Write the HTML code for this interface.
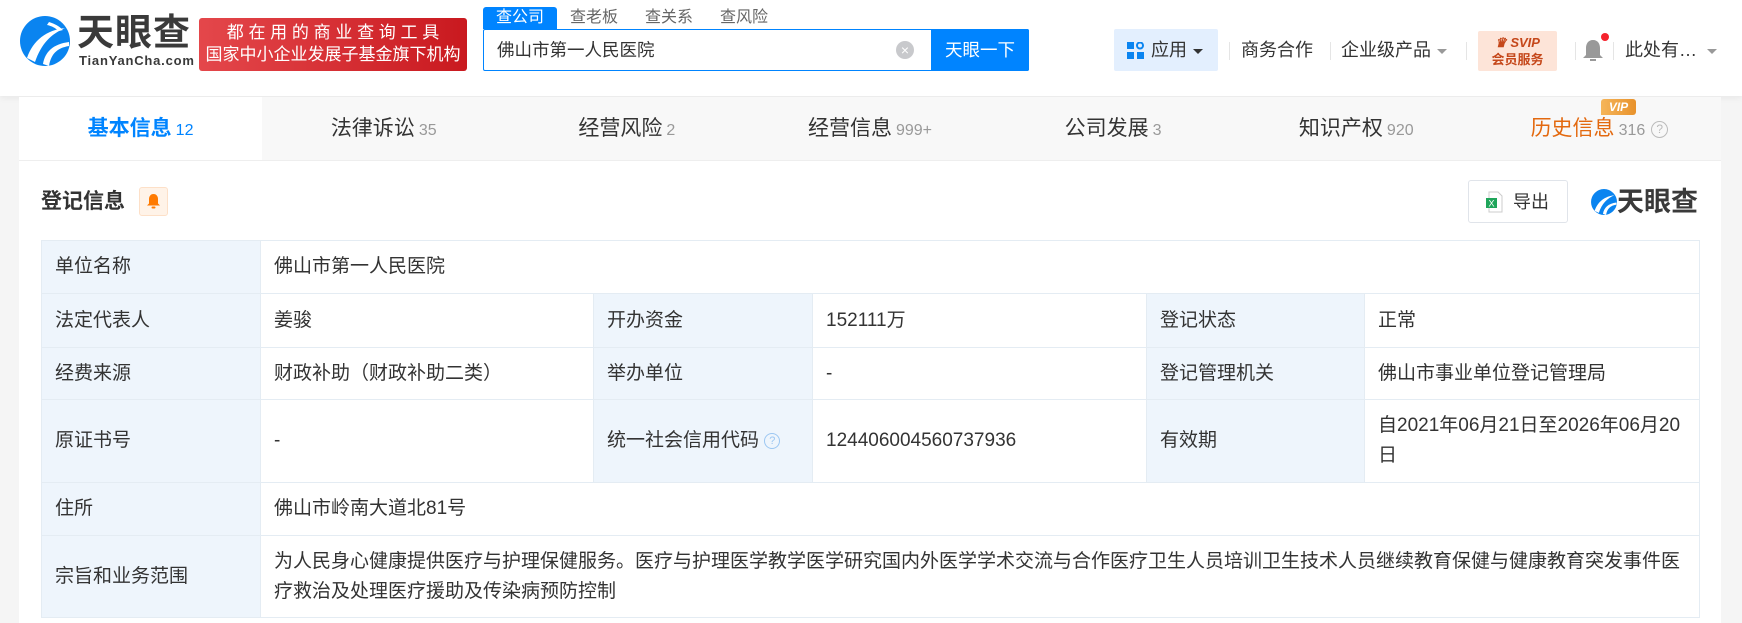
<!DOCTYPE html>
<html><head><meta charset="utf-8"><style>
*{margin:0;padding:0;box-sizing:border-box}
body{width:1742px;height:623px;overflow:hidden;background:#f5f5f5;font-family:"Liberation Sans","Noto Sans CJK SC",sans-serif;color:#333;position:relative}
.a{position:absolute}
.hdr{left:0;top:0;width:1742px;height:96px;background:#fff;box-shadow:0 2px 6px rgba(0,0,0,.06)}
.badge{left:199px;top:18px;width:268px;height:53px;border-radius:3px;background:linear-gradient(90deg,#e4474b,#c9191f);color:#fff;font-size:17px;line-height:22px;padding-top:4px;text-align:center}
.stab{top:7px;height:22px;font-size:16px;line-height:22px;color:#666}
.nav{top:38px;font-size:18px;line-height:24px;color:#333}
.div{top:42px;width:1px;height:18px;background:#e5e5e5}
.caret{display:inline-block;border-left:5px solid transparent;border-right:5px solid transparent;border-top:5px solid #999;vertical-align:middle;margin-left:6px}
.card{left:19px;top:97px;width:1702px;height:526px;background:#fff}
.tabs{left:19px;top:97px;width:1702px;height:64px;background:#f8f8f8;border-bottom:1px solid #eee;display:flex}
.tab{flex:1;text-align:center;font-size:21px;line-height:63px;color:#333}
.tab small{font-size:16px;color:#999;margin-left:4px}
table{position:absolute;left:41px;top:240px;width:1658px;border-collapse:collapse;font-size:19px;color:#333;table-layout:fixed}
td{border:1px solid #e4ecf3;padding:0 13px;line-height:30px;vertical-align:middle;white-space:nowrap}
td.l{background:#eef5fc}
</style></head><body>
<div class="a hdr"></div>
<svg class="a" style="left:19px;top:14px" width="52" height="54" viewBox="0 0 52 54">
<circle cx="26" cy="27" r="25" fill="#0a84f0"/>
<path d="M8 44 C14 26 28 16 46 14 C32 20 22 30 16 48 Z" fill="#fff"/>
<path d="M24 50 C26 38 34 30 50 28 L50 32 C38 34 32 40 30 52 Z" fill="#fff"/>
<path d="M30 8 C36 10 40 12 44 16 L40 17 C36 14 33 12 28 11 Z" fill="#fff"/>
</svg>
<div class="a" style="left:77px;top:13px;font-size:37px;font-weight:bold;color:#3a3a3a;letter-spacing:1px;line-height:40px">天眼查</div>
<div class="a" style="left:79px;top:53px;font-size:13px;font-weight:bold;color:#3a3a3a;letter-spacing:.8px">TianYanCha.com</div>
<div class="a badge">都&nbsp;在&nbsp;用&nbsp;的&nbsp;商&nbsp;业&nbsp;查&nbsp;询&nbsp;工&nbsp;具<br>国家中小企业发展子基金旗下机构</div>
<div class="a stab" style="left:483px;width:74px;background:#0084ff;color:#fff;text-align:center;border-radius:3px 3px 0 0">查公司</div>
<div class="a stab" style="left:570px">查老板</div>
<div class="a stab" style="left:645px">查关系</div>
<div class="a stab" style="left:720px">查风险</div>
<div class="a" style="left:483px;top:29px;width:546px;height:42px;border:1px solid #0084ff;border-radius:2px;background:#fff"></div>
<div class="a" style="left:497px;top:38px;font-size:17.5px;line-height:24px;color:#333">佛山市第一人民医院</div>
<div class="a" style="left:896px;top:41px;width:18px;height:18px;border-radius:50%;background:#c8c9cc;color:#fff;font-size:14px;line-height:18px;text-align:center">×</div>
<div class="a" style="left:931px;top:29px;width:98px;height:42px;background:#0084ff;color:#fff;font-size:17.5px;line-height:42px;text-align:center;border-radius:0 2px 2px 0">天眼一下</div>
<div class="a" style="left:1114px;top:29px;width:104px;height:42px;background:#e3effe;border-radius:2px"></div>
<svg class="a" style="left:1127px;top:42px" width="17" height="17"><rect x="0" y="0" width="7" height="7" fill="#0a84f0"/><circle cx="13" cy="3.5" r="3" fill="none" stroke="#0a84f0" stroke-width="2"/><rect x="0" y="10" width="7" height="7" fill="#0a84f0"/><rect x="10" y="10" width="7" height="7" fill="#0a84f0"/></svg>
<div class="a nav" style="left:1151px">应用<span class="caret" style="border-top-color:#333"></span></div>
<div class="a div" style="left:1229px"></div>
<div class="a nav" style="left:1241px">商务合作</div>
<div class="a div" style="left:1330px"></div>
<div class="a nav" style="left:1341px">企业级产品<span class="caret"></span></div>
<div class="a div" style="left:1466px"></div>
<div class="a" style="left:1478px;top:31px;width:79px;height:40px;background:#fde4d8;border-radius:2px;text-align:center;color:#c5471a;font-weight:bold;font-size:13px;line-height:17px;padding-top:3px"><i style="font-size:13px">♛ SVIP</i><br>会员服务</div>
<div class="a div" style="left:1575px"></div>
<svg class="a" style="left:1582px;top:38px" width="22" height="24"><path d="M11 2 C6 2 4 6 4 10 L4 17 L1 20 L21 20 L18 17 L18 10 C18 6 16 2 11 2Z" fill="#999"/><rect x="8" y="21" width="6" height="2" fill="#999"/></svg>
<div class="a" style="left:1601px;top:33px;width:8px;height:8px;border-radius:50%;background:#f5222d"></div>
<div class="a div" style="left:1613px"></div>
<div class="a nav" style="left:1625px">此处有…<span class="caret" style="margin-left:10px"></span></div>

<div class="a card"></div>
<div class="a tabs">
<div class="tab" style="background:#fff;color:#0084ff;font-weight:bold">基本信息<small style="color:#0084ff;font-weight:normal">12</small></div>
<div class="tab">法律诉讼<small>35</small></div>
<div class="tab">经营风险<small>2</small></div>
<div class="tab">经营信息<small>999+</small></div>
<div class="tab">公司发展<small>3</small></div>
<div class="tab">知识产权<small>920</small></div>
<div class="tab" style="color:#e3690f">历史信息<small>316</small><span style="display:inline-block;width:17px;height:17px;border:1px solid #bbb;border-radius:50%;color:#bbb;font-size:12px;line-height:15px;margin-left:6px;vertical-align:middle">?</span></div>
</div>
<div class="a" style="left:1601px;top:99px;width:35px;height:16px;background:linear-gradient(90deg,#f5b55a,#e8922c);color:#fff;font-size:12px;font-weight:bold;font-style:italic;line-height:16px;text-align:center;border-radius:3px 3px 3px 0">VIP</div>

<div class="a" style="left:41px;top:188px;font-size:21px;font-weight:bold;line-height:28px;color:#333">登记信息</div>
<div class="a" style="left:139px;top:187px;width:29px;height:29px;background:#fff3e8;border:1px solid #fde0c8;border-radius:3px"></div>
<svg class="a" style="left:146px;top:193px" width="15" height="16"><path d="M7.5 1 C4.5 1 3 3.5 3 6 L3 10.5 L1 12.5 L14 12.5 L12 10.5 L12 6 C12 3.5 10.5 1 7.5 1Z" fill="#ff7a00"/><rect x="5.5" y="13.5" width="4" height="2" rx="1" fill="#ff7a00"/></svg>
<div class="a" style="left:1468px;top:180px;width:100px;height:43px;border:1px solid #e0e4ea;border-radius:3px;background:#fff"></div>
<svg class="a" style="left:1486px;top:191px" width="18" height="22"><path d="M3 1 L12 1 L16 5 L16 21 L3 21Z" fill="#fff" stroke="#ccc"/><rect x="0" y="7" width="11" height="10" fill="#1fa55a"/><text x="2.5" y="15.5" font-size="9" fill="#fff" font-family="Liberation Sans">X</text></svg>
<div class="a" style="left:1513px;top:190px;font-size:18px;line-height:24px">导出</div>
<svg class="a" style="left:1590px;top:188px" width="28" height="28" viewBox="0 0 52 54"><circle cx="26" cy="27" r="25" fill="#0a84f0"/><path d="M8 44 C14 26 28 16 46 14 C32 20 22 30 16 48 Z" fill="#fff"/><path d="M24 50 C26 38 34 30 50 28 L50 32 C38 34 32 40 30 52 Z" fill="#fff"/></svg>
<div class="a" style="left:1617px;top:186px;font-size:27px;font-weight:bold;color:#3a3a3a;line-height:32px">天眼查</div>

<table>
<colgroup><col style="width:219px"><col style="width:333px"><col style="width:219px"><col style="width:334px"><col style="width:218px"><col style="width:335px"></colgroup>
<tr style="height:53px"><td class="l">单位名称</td><td colspan="5">佛山市第一人民医院</td></tr>
<tr style="height:54px"><td class="l">法定代表人</td><td>姜骏</td><td class="l">开办资金</td><td>152111万</td><td class="l">登记状态</td><td>正常</td></tr>
<tr style="height:52px"><td class="l">经费来源</td><td>财政补助（财政补助二类）</td><td class="l">举办单位</td><td>-</td><td class="l">登记管理机关</td><td>佛山市事业单位登记管理局</td></tr>
<tr style="height:83px"><td class="l">原证书号</td><td>-</td><td class="l">统一社会信用代码 <span style="display:inline-block;width:16px;height:16px;border:1px solid #9cc7f2;border-radius:50%;color:#9cc7f2;font-size:11px;line-height:14px;text-align:center;vertical-align:middle">?</span></td><td>124406004560737936</td><td class="l">有效期</td><td>自2021年06月21日至2026年06月20<br>日</td></tr>
<tr style="height:53px"><td class="l">住所</td><td colspan="5">佛山市岭南大道北81号</td></tr>
<tr style="height:82px"><td class="l">宗旨和业务范围</td><td colspan="5">为人民身心健康提供医疗与护理保健服务。医疗与护理医学教学医学研究国内外医学学术交流与合作医疗卫生人员培训卫生技术人员继续教育保健与健康教育突发事件医<br>疗救治及处理医疗援助及传染病预防控制</td></tr>
</table>
</body></html>
